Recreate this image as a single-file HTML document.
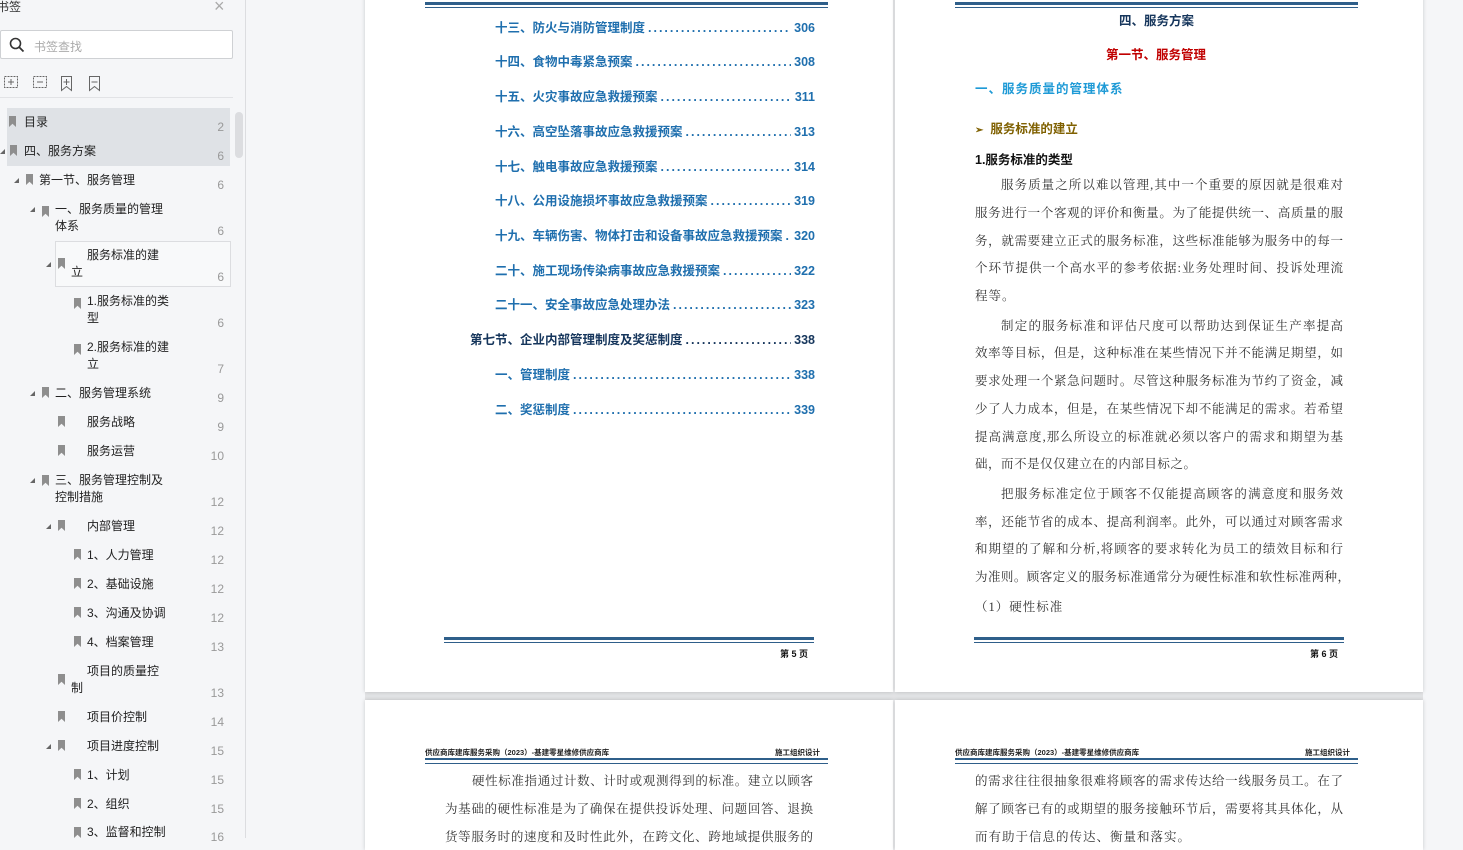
<!DOCTYPE html>
<html><head><meta charset="utf-8">
<style>
*{margin:0;padding:0;box-sizing:border-box}
body{width:1463px;height:838px;overflow:hidden;background:#f5f6f8;position:relative;font-family:"Liberation Sans","Noto Sans CJK SC",sans-serif;color:#222}
.a{position:absolute;white-space:nowrap}
#side{position:absolute;left:0;top:0;width:246px;height:838px;background:#f5f6f8;border-right:1px solid #dcdde0}
.it{position:absolute;font-size:12px;color:#222;line-height:17px}
.num{position:absolute;left:208px;width:16px;text-align:right;font-size:12px;color:#999}
.bm{position:absolute;width:7px;height:11px;background:#8e8e8e;clip-path:polygon(0 0,100% 0,100% 100%,50% 70%,0 100%)}
.ar{position:absolute;width:0;height:0;border-left:5px solid transparent;border-bottom:5px solid #666}
.page{position:absolute;background:#fff;box-shadow:0 0 4px rgba(0,0,0,.18)}
.dl{position:absolute;height:6px;border-top:3px solid #2f5f8a;border-bottom:1.5px solid #2f5f8a}
.toc{position:absolute;font-size:12.5px;font-weight:bold;color:#1f6fae;line-height:16px;display:flex;font-family:"Liberation Sans","Noto Sans CJK SC",sans-serif}
.toc .d{flex:1;overflow:hidden;letter-spacing:2px;margin:0 3px}
.ln{position:absolute;font-size:12.5px;color:#333;line-height:16px;text-align:justify;text-align-last:justify;font-family:"Liberation Serif","Noto Serif CJK SC",serif;white-space:nowrap;overflow:hidden}
</style></head><body>
<div id="side">
<div class="a" style="left:-3px;top:-2px;font-size:12px;color:#333">书签</div>
<div class="a" style="left:214px;top:-4px;font-size:18px;color:#aaa">×</div>
<div class="a" style="left:0;top:30px;width:233px;height:29px;background:#fff;border:1px solid #cfd1d4;border-radius:2px"></div>
<svg class="a" style="left:9px;top:37px" width="16" height="16"><circle cx="6.5" cy="6.5" r="5" fill="none" stroke="#333" stroke-width="1.6"/><line x1="10" y1="10" x2="14.5" y2="14.5" stroke="#333" stroke-width="1.8"/></svg>
<div class="a" style="left:34px;top:38px;font-size:12px;color:#aaa">书签查找</div>
<svg class="a" style="left:3px;top:75px" width="110" height="17" fill="none" stroke="#666" stroke-width="1">
<rect x="1.5" y="1.5" width="13" height="11" stroke-dasharray="2 1"/><line x1="8" y1="4" x2="8" y2="10"/><line x1="5" y1="7" x2="11" y2="7"/>
<rect x="30.5" y="1.5" width="13" height="11" stroke-dasharray="2 1"/><line x1="34" y1="7" x2="40" y2="7"/>
<path d="M58.5 1.5h10v14l-5-4-5 4z"/><line x1="63.5" y1="4" x2="63.5" y2="10"/><line x1="60.5" y1="7" x2="66.5" y2="7"/>
<path d="M86.5 1.5h10v14l-5-4-5 4z"/><line x1="88.5" y1="7" x2="94.5" y2="7"/>
</svg>
<div class="a" style="left:0;top:97px;width:233px;height:1px;background:#e2e3e6"></div>
<div class="a" style="left:7px;top:108px;width:223px;height:58px;background:#dfe2e6"></div>
<div class="a" style="left:55px;top:241px;width:176px;height:46px;border:1px solid #dcdde0;background:#f8f9fa"></div>
<div class="a" style="left:235px;top:112px;width:8px;height:46px;background:#dcdde0;border-radius:4px"></div>

<div class="bm" style="left:9px;top:116px"></div><div class="it" style="left:24px;top:114px">目录</div><div class="num" style="top:120px">2</div>
<div class="ar" style="left:0;top:149px"></div><div class="bm" style="left:10px;top:145px"></div><div class="it" style="left:24px;top:143px">四、服务方案</div><div class="num" style="top:149px">6</div>
<div class="ar" style="left:14px;top:178px"></div><div class="bm" style="left:26px;top:174px"></div><div class="it" style="left:39px;top:172px">第一节、服务管理</div><div class="num" style="top:178px">6</div>
<div class="ar" style="left:30px;top:207px"></div><div class="bm" style="left:42px;top:206px"></div><div class="it" style="left:55px;top:201px">一、服务质量的管理<br>体系</div><div class="num" style="top:224px">6</div>
<div class="ar" style="left:46px;top:262px"></div><div class="bm" style="left:58px;top:258px"></div><div class="it" style="left:87px;top:247px">服务标准的建</div><div class="it" style="left:71px;top:264px">立</div><div class="num" style="top:270px">6</div>
<div class="bm" style="left:74px;top:298px"></div><div class="it" style="left:87px;top:293px">1.服务标准的类<br>型</div><div class="num" style="top:316px">6</div>
<div class="bm" style="left:74px;top:344px"></div><div class="it" style="left:87px;top:339px">2.服务标准的建<br>立</div><div class="num" style="top:362px">7</div>
<div class="ar" style="left:30px;top:391px"></div><div class="bm" style="left:42px;top:387px"></div><div class="it" style="left:55px;top:385px">二、服务管理系统</div><div class="num" style="top:391px">9</div>
<div class="bm" style="left:58px;top:416px"></div><div class="it" style="left:87px;top:414px">服务战略</div><div class="num" style="top:420px">9</div>
<div class="bm" style="left:58px;top:445px"></div><div class="it" style="left:87px;top:443px">服务运营</div><div class="num" style="top:449px">10</div>
<div class="ar" style="left:30px;top:478px"></div><div class="bm" style="left:42px;top:475px"></div><div class="it" style="left:55px;top:472px">三、服务管理控制及<br>控制措施</div><div class="num" style="top:495px">12</div>
<div class="ar" style="left:46px;top:524px"></div><div class="bm" style="left:58px;top:520px"></div><div class="it" style="left:87px;top:518px">内部管理</div><div class="num" style="top:524px">12</div>
<div class="bm" style="left:74px;top:549px"></div><div class="it" style="left:87px;top:547px">1、人力管理</div><div class="num" style="top:553px">12</div>
<div class="bm" style="left:74px;top:578px"></div><div class="it" style="left:87px;top:576px">2、基础设施</div><div class="num" style="top:582px">12</div>
<div class="bm" style="left:74px;top:607px"></div><div class="it" style="left:87px;top:605px">3、沟通及协调</div><div class="num" style="top:611px">12</div>
<div class="bm" style="left:74px;top:636px"></div><div class="it" style="left:87px;top:634px">4、档案管理</div><div class="num" style="top:640px">13</div>
<div class="bm" style="left:58px;top:674px"></div><div class="it" style="left:87px;top:663px">项目的质量控</div><div class="it" style="left:71px;top:680px">制</div><div class="num" style="top:686px">13</div>
<div class="bm" style="left:58px;top:711px"></div><div class="it" style="left:87px;top:709px">项目价控制</div><div class="num" style="top:715px">14</div>
<div class="ar" style="left:46px;top:744px"></div><div class="bm" style="left:58px;top:740px"></div><div class="it" style="left:87px;top:738px">项目进度控制</div><div class="num" style="top:744px">15</div>
<div class="bm" style="left:74px;top:769px"></div><div class="it" style="left:87px;top:767px">1、计划</div><div class="num" style="top:773px">15</div>
<div class="bm" style="left:74px;top:798px"></div><div class="it" style="left:87px;top:796px">2、组织</div><div class="num" style="top:802px">15</div>
<div class="bm" style="left:74px;top:827px"></div><div class="it" style="left:87px;top:824px">3、监督和控制</div><div class="num" style="top:830px">16</div>
</div>

<div class="a" style="left:365px;top:692px;width:1058px;height:8px;background:#e2e3e5"></div>
<div class="page" style="left:365px;top:-4px;width:528px;height:696px"></div>
<div class="page" style="left:895px;top:-4px;width:528px;height:696px"></div>
<div class="page" style="left:365px;top:700px;width:528px;height:150px"></div>
<div class="page" style="left:895px;top:700px;width:528px;height:150px"></div>

<!-- page 5 -->
<div class="dl" style="left:425px;top:2px;width:403px"></div>
<div class="toc" style="left:495px;top:20px;width:320px"><span>十三、防火与消防管理制度</span><span class="d">........................................................</span><span>306</span></div>
<div class="toc" style="left:495px;top:54px;width:320px"><span>十四、食物中毒紧急预案</span><span class="d">........................................................</span><span>308</span></div>
<div class="toc" style="left:495px;top:89px;width:320px"><span>十五、火灾事故应急救援预案</span><span class="d">........................................................</span><span>311</span></div>
<div class="toc" style="left:495px;top:124px;width:320px"><span>十六、高空坠落事故应急救援预案</span><span class="d">........................................................</span><span>313</span></div>
<div class="toc" style="left:495px;top:159px;width:320px"><span>十七、触电事故应急救援预案</span><span class="d">........................................................</span><span>314</span></div>
<div class="toc" style="left:495px;top:193px;width:320px"><span>十八、公用设施损坏事故应急救援预案</span><span class="d">........................................................</span><span>319</span></div>
<div class="toc" style="left:495px;top:228px;width:320px"><span>十九、车辆伤害、物体打击和设备事故应急救援预案</span><span class="d">........</span><span>320</span></div>
<div class="toc" style="left:495px;top:263px;width:320px"><span>二十、施工现场传染病事故应急救援预案</span><span class="d">........................................................</span><span>322</span></div>
<div class="toc" style="left:495px;top:297px;width:320px"><span>二十一、安全事故应急处理办法</span><span class="d">........................................................</span><span>323</span></div>
<div class="toc" style="left:470px;top:332px;width:345px;color:#16365c"><span>第七节、企业内部管理制度及奖惩制度</span><span class="d">........................................................</span><span>338</span></div>
<div class="toc" style="left:495px;top:367px;width:320px"><span>一、管理制度</span><span class="d">........................................................................................</span><span>338</span></div>
<div class="toc" style="left:495px;top:402px;width:320px"><span>二、奖惩制度</span><span class="d">........................................................................................</span><span>339</span></div>
<div class="dl" style="left:444px;top:637px;width:370px"></div>
<div class="a" style="left:780px;top:647px;font-size:9px;font-weight:bold;color:#111">第 5 页</div>

<!-- page 6 -->
<div class="dl" style="left:955px;top:2px;width:403px"></div>
<div class="a" style="left:1119px;top:10px;font-size:12.5px;font-weight:bold;color:#16365c">四、服务方案</div>
<div class="a" style="left:1106px;top:44px;font-size:12.5px;font-weight:bold;color:#c00000">第一节、服务管理</div>
<div class="a" style="left:975px;top:78px;font-size:12.5px;font-weight:bold;color:#1e9ad6;letter-spacing:1px">一、服务质量的管理体系</div>
<div class="a" style="left:975px;top:118px;font-size:12.5px;font-weight:bold;color:#7f6000"><span style="font-size:10px">➢</span>&nbsp; 服务标准的建立</div>
<div class="a" style="left:975px;top:149px;font-size:12.5px;font-weight:bold;color:#111">1.服务标准的类型</div>
<div class="ln" style="left:1001px;top:177px;width:342px">服务质量之所以难以管理,其中一个重要的原因就是很难对</div>
<div class="ln" style="left:975px;top:205px;width:368px">服务进行一个客观的评价和衡量。为了能提供统一、高质量的服</div>
<div class="ln" style="left:975px;top:233px;width:368px">务，就需要建立正式的服务标准，这些标准能够为服务中的每一</div>
<div class="ln" style="left:975px;top:260px;width:368px">个环节提供一个高水平的参考依据:业务处理时间、投诉处理流</div>
<div class="ln" style="left:975px;top:288px;text-align-last:auto;letter-spacing:1px">程等。</div>
<div class="ln" style="left:1001px;top:318px;width:342px">制定的服务标准和评估尺度可以帮助达到保证生产率提高</div>
<div class="ln" style="left:975px;top:345px;width:368px">效率等目标，但是，这种标准在某些情况下并不能满足期望，如</div>
<div class="ln" style="left:975px;top:373px;width:368px">要求处理一个紧急问题时。尽管这种服务标准为节约了资金，减</div>
<div class="ln" style="left:975px;top:401px;width:368px">少了人力成本，但是，在某些情况下却不能满足的需求。若希望</div>
<div class="ln" style="left:975px;top:429px;width:368px">提高满意度,那么所设立的标准就必须以客户的需求和期望为基</div>
<div class="ln" style="left:975px;top:456px;width:221px">础，而不是仅仅建立在的内部目标之。</div>
<div class="ln" style="left:1001px;top:486px;width:342px">把服务标准定位于顾客不仅能提高顾客的满意度和服务效</div>
<div class="ln" style="left:975px;top:514px;width:368px">率，还能节省的成本、提高利润率。此外，可以通过对顾客需求</div>
<div class="ln" style="left:975px;top:541px;width:368px">和期望的了解和分析,将顾客的要求转化为员工的绩效目标和行</div>
<div class="ln" style="left:975px;top:569px;width:375px">为准则。顾客定义的服务标准通常分为硬性标准和软性标准两种，</div>
<div class="ln" style="left:975px;top:599px;text-align-last:auto;letter-spacing:1px">（1）硬性标准</div>
<div class="dl" style="left:974px;top:637px;width:370px"></div>
<div class="a" style="left:1310px;top:647px;font-size:9px;font-weight:bold;color:#111">第 6 页</div>

<!-- page 7 -->
<div class="a" style="left:425px;top:747px;font-size:7.5px;color:#222;font-weight:bold">供应商库建库服务采购（2023）-基建零星维修供应商库</div>
<div class="a" style="left:775px;top:747px;font-size:7.5px;color:#222;font-weight:bold">施工组织设计</div>
<div class="dl" style="left:425px;top:758px;width:403px;border-top-width:2px"></div>
<div class="ln" style="left:472px;top:773px;width:341px">硬性标准指通过计数、计时或观测得到的标准。建立以顾客</div>
<div class="ln" style="left:445px;top:801px;width:368px">为基础的硬性标准是为了确保在提供投诉处理、问题回答、退换</div>
<div class="ln" style="left:445px;top:829px;width:368px">货等服务时的速度和及时性此外，在跨文化、跨地域提供服务的</div>

<!-- page 8 -->
<div class="a" style="left:955px;top:747px;font-size:7.5px;color:#222;font-weight:bold">供应商库建库服务采购（2023）-基建零星维修供应商库</div>
<div class="a" style="left:1305px;top:747px;font-size:7.5px;color:#222;font-weight:bold">施工组织设计</div>
<div class="dl" style="left:955px;top:758px;width:403px;border-top-width:2px"></div>
<div class="ln" style="left:975px;top:773px;width:368px">的需求往往很抽象很难将顾客的需求传达给一线服务员工。在了</div>
<div class="ln" style="left:975px;top:801px;width:368px">解了顾客已有的或期望的服务接触环节后，需要将其具体化，从</div>
<div class="ln" style="left:975px;top:829px;text-align-last:auto;letter-spacing:1px">而有助于信息的传达、衡量和落实。</div>
</body></html>
